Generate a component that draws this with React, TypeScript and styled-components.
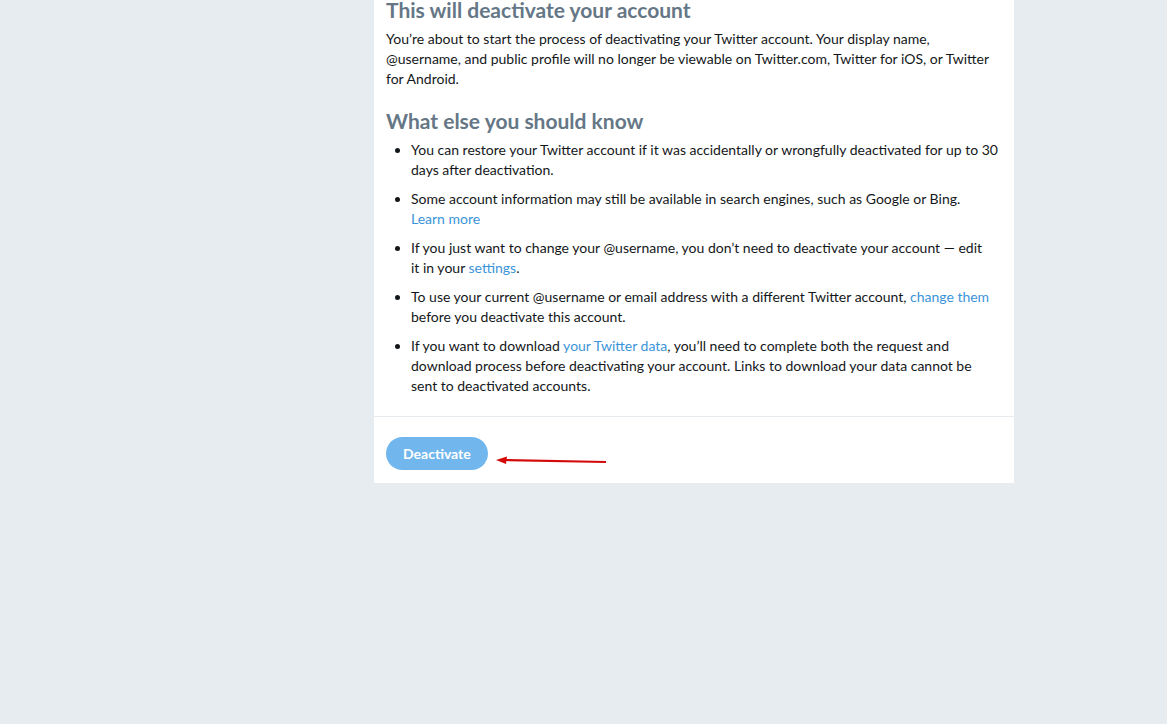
import React from "react";
import styled, { createGlobalStyle } from "styled-components";

const GlobalStyle = createGlobalStyle`
  html, body {
    margin: 0;
    padding: 0;
    background: #e6ecf0;
  }
  body {
    font-family: Lato, "Noto Sans", "Liberation Sans", sans-serif;
    color: #14171a;
  }
`;

const Page = styled.div`
  min-height: 724px;
  padding-left: 374px;
`;

const Panel = styled.div`
  width: 640px;
  background: #ffffff;
`;

const Section = styled.section`
  padding: 0 12px 20px;
  border-bottom: 1px solid #e6ecf0;
`;

const Heading = styled.h2<{ $top?: number }>`
  margin: ${(p) => p.$top ?? 0}px 0 0;
  font-size: 21px;
  line-height: 24px;
  font-weight: 700;
  color: #657786;
`;

const Text = styled.p`
  margin: 7px 0 0;
  font-size: 14px;
  line-height: 20px;
`;

const List = styled.ul`
  margin: 7px 0 0;
  padding: 0 0 0 25px;
`;

const Item = styled.li`
  font-size: 14px;
  line-height: 20px;
  & + & {
    margin-top: 9px;
  }
`;

const Link = styled.a`
  color: #3b94d9;
  text-decoration: none;
`;

const Keep = styled.span`
  white-space: nowrap;
`;

const Footer = styled.div`
  display: flex;
  align-items: center;
  padding: 20px 12px 13px;
`;

const Button = styled.button`
  height: 33px;
  padding: 0 17px;
  border: none;
  border-radius: 999px;
  background: #71b7ed;
  color: #ffffff;
  font-family: inherit;
  font-size: 14px;
  font-weight: 700;
`;

const Arrow = styled.svg`
  margin-left: 7px;
  margin-top: 15px;
`;

export default function App() {
  return (
    <>
      <GlobalStyle />
      <Page>
        <Panel>
          <Section>
            <Heading $top={-2}>This will deactivate your account</Heading>
            <Text>
              You’re about to start the process of deactivating your Twitter
              account. Your display name, @username, and public profile will no
              longer be viewable on Twitter.com, Twitter for iOS, or Twitter for
              Android.
            </Text>
            <Heading $top={20}>What else you should know</Heading>
            <List>
              <Item>
                You can restore your Twitter account if it was accidentally or
                wrongfully deactivated for up to 30 days after deactivation.
              </Item>
              <Item>
                Some account information may still be available in search
                engines, such as Google or Bing.{" "}
                <Keep>
                  <Link href="#">Learn more</Link>
                </Keep>
              </Item>
              <Item>
                If you just want to change your @username, you don’t need to
                deactivate your account — edit{" "}
                <Keep>
                  it in your <Link href="#">settings</Link>.
                </Keep>
              </Item>
              <Item>
                To use your current @username or email address with a different
                Twitter account, <Link href="#">change them</Link> before you
                deactivate this account.
              </Item>
              <Item>
                If you want to download <Link href="#">your Twitter data</Link>,
                you’ll need to complete both the request and download process
                before deactivating your account. Links to download your data
                cannot be <Keep>sent to deactivated accounts.</Keep>
              </Item>
            </List>
          </Section>
          <Footer>
            <Button>Deactivate</Button>
            <Arrow width="112" height="10" viewBox="0 0 112 10">
              <path d="M10 4 L111 6" stroke="#d40a0a" strokeWidth="2.2" />
              <path d="M1 4 L12 0.5 L11 8 Z" fill="#d40a0a" />
            </Arrow>
          </Footer>
        </Panel>
      </Page>
    </>
  );
}
